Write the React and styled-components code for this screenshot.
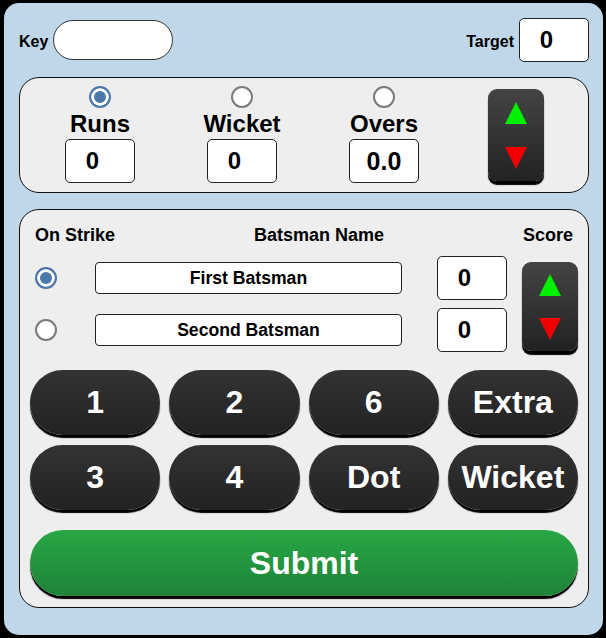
import React, { useState } from "react";
import styled, { createGlobalStyle } from "styled-components";

const Global = createGlobalStyle`
  html, body { margin: 0; padding: 0; background: #000; }
  body { font-family: "Liberation Sans", Arial, sans-serif; }
  * { box-sizing: border-box; }
`;

const Frame = styled.div`
  width: 599px;
  height: 632px;
  margin: 3px 0 0 4px;
  padding: 15px 14px 0 15px;
  background: #c0d6e9;
  border-radius: 15px;
  display: flex;
  flex-direction: column;
`;

const TopRow = styled.div`
  display: flex;
  align-items: center;
  justify-content: space-between;
  height: 44px;
`;

const Field = styled.label`
  display: flex;
  align-items: center;
  gap: 5px;
  font-weight: bold;
  font-size: 16px;
  color: #000;
`;

const Caption = styled.span`
  padding-top: 4px;
`;

const KeyInput = styled.input`
  width: 120px;
  height: 40px;
  border: 1px solid #333;
  border-radius: 20px;
  background: #fff;
  outline: none;
`;

const ValueBox = styled.input`
  width: 70px;
  height: 44px;
  border: 1px solid #222;
  border-radius: 5px;
  background: #fff;
  text-align: center;
  font-family: "Liberation Sans", Arial, sans-serif;
  font-weight: bold;
  font-size: ${(p) => p.$size || 24}px;
  color: #000;
  padding: 0 ${(p) => (p.$numeric ? 15 : 0)}px 0 0;
  outline: none;
`;

const Panel = styled.div`
  margin-top: ${(p) => p.$mt}px;
  background: #eeeeee;
  border: 1px solid #111;
  border-radius: 20px;
`;

const StatsPanel = styled(Panel)`
  display: flex;
  align-items: center;
  padding: 8px 44px 9px 9px;
`;

const StatCol = styled.div`
  width: 142px;
  display: flex;
  flex-direction: column;
  align-items: center;
`;

const StatLabel = styled.div`
  font-weight: bold;
  font-size: 24px;
  line-height: 28px;
  padding-top: 2px;
  margin-bottom: 1px;
  color: #000;
`;

const Radio = styled.input.attrs({ type: "radio" })`
  appearance: none;
  -webkit-appearance: none;
  width: 22px;
  height: 22px;
  margin: 0;
  border-radius: 50%;
  border: 2px solid #7a7a7a;
  background: #fff;
  cursor: pointer;
  &:checked {
    border-color: #4a78a8;
    background: #4a78a8;
    box-shadow: inset 0 0 0 3px #fff;
  }
`;

const ArrowButton = styled.div`
  width: 56px;
  height: 92px;
  margin-left: auto;
  border-radius: 9px;
  background: linear-gradient(#444, #222);
  box-shadow: 0 4px 1px #000;
  display: flex;
  flex-direction: column;
  align-items: center;
  justify-content: space-between;
  padding: 13px 0 12px;
  cursor: pointer;
`;

const Tri = styled.span`
  width: 0;
  height: 0;
  border-left: 11px solid transparent;
  border-right: 11px solid transparent;
  ${(p) =>
    p.$up
      ? "border-bottom: 22px solid #00f000;"
      : "border-top: 22px solid #f20000;"}
`;

const LowerPanel = styled(Panel)`
  padding: 14px 10px 11px 10px;
  display: flex;
  flex-direction: column;
`;

const Header = styled.div`
  display: flex;
  justify-content: space-between;
  padding: 0 5px;
  font-weight: bold;
  font-size: 18px;
  line-height: 22px;
  color: #000;
`;

const BatGrid = styled.div`
  margin-top: 10px;
  display: grid;
  grid-template-columns: 50px 1fr 70px 56px;
  grid-template-rows: 44px 44px;
  column-gap: 15px;
  row-gap: 8px;
  align-items: center;
`;

const RadioCell = styled.div`
  padding-left: 5px;
  display: flex;
  align-items: center;
`;

const NameInput = styled.input`
  width: 307px;
  height: 32px;
  border: 1px solid #222;
  border-radius: 4px;
  background: #fff;
  text-align: center;
  font-family: "Liberation Sans", Arial, sans-serif;
  font-weight: bold;
  font-size: 17.6px;
  color: #000;
  padding: 0;
  outline: none;
`;

const BatArrow = styled(ArrowButton)`
  grid-column: 4;
  grid-row: 1 / span 2;
  width: 56px;
  height: 89px;
  margin: 6px 0 0 0;
  align-self: start;
  padding: 12px 0 11px;
`;

const Pad = styled.div`
  margin-top: 18px;
  display: grid;
  grid-template-columns: repeat(4, 1fr);
  grid-auto-rows: 65px;
  column-gap: 9px;
  row-gap: 10px;
`;

const PadButton = styled.button`
  border: none;
  border-radius: 33px;
  background: linear-gradient(#333, #222);
  box-shadow: 0 3px 1px #000;
  color: #fff;
  font-family: "Liberation Sans", Arial, sans-serif;
  font-weight: bold;
  font-size: 32px;
  cursor: pointer;
  padding: 0;
`;

const Submit = styled(PadButton)`
  margin-top: 20px;
  height: 66px;
  background: linear-gradient(#28a745, #1f8238);
`;

export default function App() {
  const [stat, setStat] = useState("runs");
  const [strike, setStrike] = useState(0);
  const stats = [
    { id: "runs", label: "Runs", value: "0", size: 24, numeric: true },
    { id: "wicket", label: "Wicket", value: "0", size: 24, numeric: true },
    { id: "overs", label: "Overs", value: "0.0", size: 25, numeric: false },
  ];
  const keys = ["1", "2", "6", "Extra", "3", "4", "Dot", "Wicket"];
  const batsmen = ["First Batsman", "Second Batsman"];
  return (
    <>
      <Global />
      <Frame>
        <TopRow>
          <Field>
            <Caption>Key</Caption>
            <KeyInput />
          </Field>
          <Field>
            <Caption>Target</Caption>
            <ValueBox defaultValue="0" $numeric readOnly />
          </Field>
        </TopRow>

        <StatsPanel $mt={15}>
          {stats.map((s) => (
            <StatCol key={s.id}>
              <Radio
                name="stat"
                checked={stat === s.id}
                onChange={() => setStat(s.id)}
              />
              <StatLabel>{s.label}</StatLabel>
              <ValueBox
                defaultValue={s.value}
                $size={s.size}
                $numeric={s.numeric}
                readOnly
              />
            </StatCol>
          ))}
          <ArrowButton>
            <Tri $up />
            <Tri />
          </ArrowButton>
        </StatsPanel>

        <LowerPanel $mt={16}>
          <Header>
            <span>On Strike</span>
            <span>Batsman Name</span>
            <span>Score</span>
          </Header>
          <BatGrid>
            {batsmen.map((b, i) => (
              <React.Fragment key={b}>
                <RadioCell style={{ gridRow: i + 1 }}>
                  <Radio
                    name="strike"
                    checked={strike === i}
                    onChange={() => setStrike(i)}
                  />
                </RadioCell>
                <NameInput defaultValue={b} style={{ gridRow: i + 1 }} />
                <ValueBox
                  defaultValue="0"
                  $numeric
                  readOnly
                  style={{ gridRow: i + 1 }}
                />
              </React.Fragment>
            ))}
            <BatArrow>
              <Tri $up />
              <Tri />
            </BatArrow>
          </BatGrid>
          <Pad>
            {keys.map((k) => (
              <PadButton key={k}>{k}</PadButton>
            ))}
          </Pad>
          <Submit>Submit</Submit>
        </LowerPanel>
      </Frame>
    </>
  );
}
